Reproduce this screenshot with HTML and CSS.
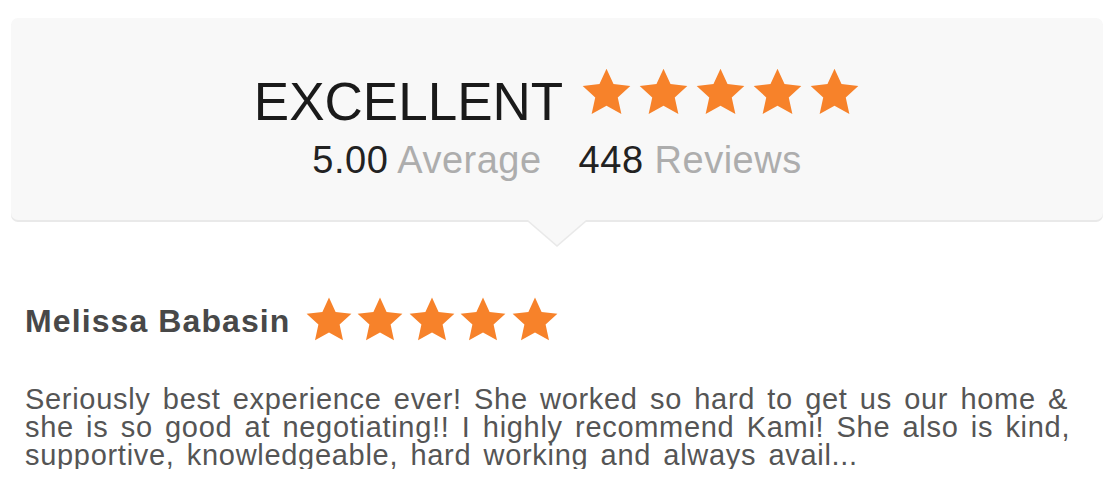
FILE: index.html
```html
<!DOCTYPE html>
<html>
<head>
<meta charset="utf-8">
<link rel="stylesheet" href="styles.css">
</head>
<body>
<svg width="0" height="0" class="defs">
  <defs>
    <symbol id="star" viewBox="0 0 24 24">
      <path d="M12 0.8l3.3 7.2 7.9 0.9-5.9 5.4 1.7 7.8L12 18.2 5 22.1l1.7-7.8-5.9-5.4 7.9-0.9z"/>
    </symbol>
  </defs>
</svg>
<div class="widget">
  <div class="summary">
    <div class="summary-top">
      <span class="rating-word">EXCELLENT</span>
      <span class="stars stars-lg">
        <svg><use href="#star"/></svg><svg><use href="#star"/></svg><svg><use href="#star"/></svg><svg><use href="#star"/></svg><svg><use href="#star"/></svg>
      </span>
    </div>
    <div class="summary-stats">
      <span class="stat"><b>5.00</b> Average</span>
      <span class="stat"><b>448</b> Reviews</span>
    </div>
    <div class="pointer"></div>
  </div>
  <div class="review">
    <div class="review-head">
      <span class="reviewer">Melissa Babasin</span>
      <span class="stars stars-md">
        <svg><use href="#star"/></svg><svg><use href="#star"/></svg><svg><use href="#star"/></svg><svg><use href="#star"/></svg><svg><use href="#star"/></svg>
      </span>
    </div>
    <p class="review-text">Seriously best experience ever! She worked so hard to get us our home &amp; she is so good at negotiating!! I highly recommend Kami! She also is kind, supportive, knowledgeable, hard working and always avail...</p>
  </div>
</div>
</body>
</html>
```
FILE: styles.css
```css
html, body {
  margin: 0;
  padding: 0;
  background: #ffffff;
}
body {
  font-family: "Liberation Sans", Arial, sans-serif;
}
.defs {
  position: absolute;
  width: 0;
  height: 0;
}
.widget {
  padding: 18px 12px 0 11px;
}
.summary {
  position: relative;
  background: #f8f8f8;
  border-radius: 7px;
  height: 202px;
  box-shadow: 0 2px 0 #e9e9e9;
  display: flex;
  flex-direction: column;
  align-items: center;
  box-sizing: border-box;
  padding-top: 54px;
}
.summary-top {
  display: flex;
  align-items: flex-start;
  gap: 18px;
}
.rating-word {
  font-size: 53px;
  line-height: 60px;
  color: #1a1a1a;
}
.stars {
  display: flex;
  fill: #f7822a;
}
.stars-lg {
  gap: 6px;
  margin-top: -5px;
}
.stars-lg svg {
  width: 51px;
  height: 51px;
}
.summary-stats {
  display: flex;
  gap: 37px;
  font-size: 38px;
  line-height: 40px;
  letter-spacing: 0.5px;
  color: #adadad;
  margin-top: 8px;
}
.stat b {
  font-weight: normal;
  color: #222;
}
.pointer {
  position: absolute;
  left: 50%;
  bottom: -25px;
  width: 0;
  height: 0;
  margin-left: -29px;
  border-left: 29px solid transparent;
  border-right: 29px solid transparent;
  border-top: 25px solid #f8f8f8;
  filter: drop-shadow(0 2px 0 #e9e9e9);
}
.review {
  padding: 76px 0 0 14px;
}
.review-head {
  display: flex;
  align-items: center;
  gap: 14px;
}
.reviewer {
  font-size: 32px;
  font-weight: bold;
  letter-spacing: 1.1px;
  color: #484848;
  padding-top: 3px;
}
.stars-md {
  gap: 3.5px;
}
.stars-md svg {
  width: 48px;
  height: 48px;
}
.review-text {
  margin: 41px 0 0 0;
  width: 1075px;
  font-size: 29px;
  line-height: 28px;
  letter-spacing: 0.7px;
  word-spacing: 3.5px;
  color: #555555;
}
```
